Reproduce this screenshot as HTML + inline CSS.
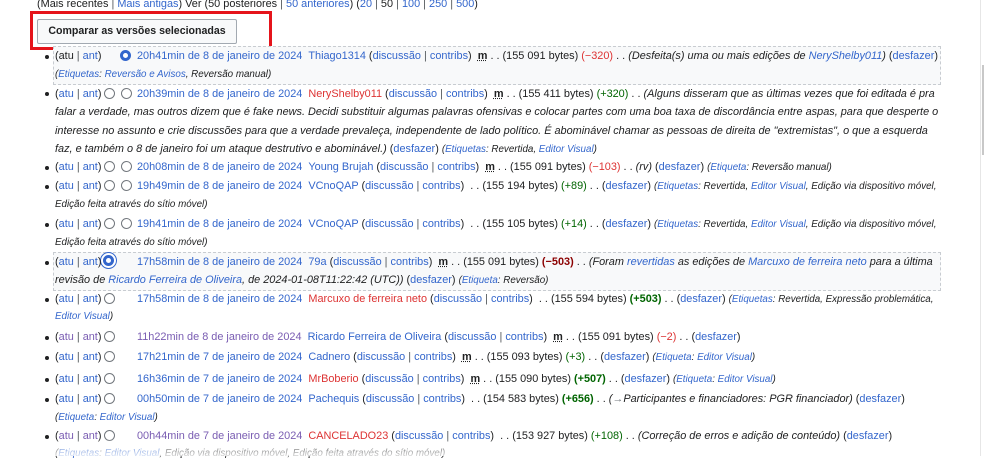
<!DOCTYPE html>
<html><head><meta charset="utf-8"><style>
body{margin:0;width:984px;height:456px;background:#fff;overflow:hidden;position:relative;font-family:"Liberation Sans",Arial,sans-serif;font-size:10.9px;color:#202122}
.l{position:absolute;white-space:nowrap;line-height:16px;height:16px}
a{color:#3366cc;text-decoration:none}
.v{color:#795cb2}
.r{color:#d33}
.i{font-style:italic}
.pos{color:#006400}
.neg{color:#8b0000}
b.neg,b.pos{font-weight:bold}
.m{font-weight:bold;text-decoration:underline dotted}
.s{color:#54595d}
.rad{position:absolute;width:9px;height:9px;border:1px solid #72777d;border-radius:50%;background:#fff}
.sel{border:3px solid #36c;width:5px;height:5px}
.dot{position:absolute;width:4px;height:4px;background:#202122;border-radius:50%}
.box{position:absolute;border:1px dashed #c8ccd1;background:#f8f9fa}
.sm{font-size:9.8px}
</style></head><body>
<div class="l" style="left:37px;top:-4px">(Mais recentes <span class="s">|</span> <a>Mais antigas</a>) Ver (50 posteriores <span class="s">|</span> <a>50 anteriores</a>) (<a>20</a> <span class="s">|</span> 50 <span class="s">|</span> <a>100</a> <span class="s">|</span> <a>250</a> <span class="s">|</span> <a>500</a>)</div>
<div style="position:absolute;left:30px;top:11px;width:236px;height:33px;border:3px solid #e5141b"></div>
<div style="position:absolute;left:37px;top:19px;width:198px;height:23px;border:1px solid #a2a9b1;border-radius:2px;background:#f8f9fa;font-weight:bold;font-size:10.6px;line-height:23px;text-align:center;color:#202122">Comparar as versões selecionadas</div>

<div class="box" style="left:53px;top:46px;width:886px;height:37px"></div>
<div class="box" style="left:53px;top:252px;width:886px;height:37px"></div>

<div class="dot" style="left:45px;top:55px"></div>
<div class="dot" style="left:45px;top:92px"></div>
<div class="dot" style="left:45px;top:166px"></div>
<div class="dot" style="left:45px;top:185px"></div>
<div class="dot" style="left:45px;top:223px"></div>
<div class="dot" style="left:45px;top:261px"></div>
<div class="dot" style="left:45px;top:298px"></div>
<div class="dot" style="left:45px;top:336px"></div>
<div class="dot" style="left:45px;top:356px"></div>
<div class="dot" style="left:45px;top:378px"></div>
<div class="dot" style="left:45px;top:398px"></div>
<div class="dot" style="left:45px;top:435px"></div>

<div class="rad sel" style="left:120px;top:50px"></div>
<div class="rad" style="left:104px;top:88px"></div><div class="rad" style="left:121px;top:88px"></div>
<div class="rad" style="left:104px;top:161px"></div><div class="rad" style="left:121px;top:161px"></div>
<div class="rad" style="left:104px;top:180px"></div><div class="rad" style="left:121px;top:180px"></div>
<div class="rad" style="left:104px;top:218px"></div><div class="rad" style="left:121px;top:218px"></div>
<div class="rad sel" style="left:103px;top:255px;box-shadow:0 0 0 2px #fff,0 0 0 3px #36c"></div>
<div class="rad" style="left:104px;top:293px"></div>
<div class="rad" style="left:104px;top:331px"></div>
<div class="rad" style="left:104px;top:351px"></div>
<div class="rad" style="left:104px;top:373px"></div>
<div class="rad" style="left:104px;top:393px"></div>
<div class="rad" style="left:104px;top:430px"></div>

<div class="l" style="left:55px;top:48px">(atu <span class="s">|</span> <a>ant</a>)</div>
<div class="l" style="left:137px;top:48px"><a>20h41min de 8 de janeiro de 2024</a> &nbsp;<a>Thiago1314</a> (<a>discussão</a> <span class="s">|</span> <a>contribs</a>) &nbsp;<span class="m">m</span> . . (155 091 bytes) <span class="r">(−320)</span> . . <span class="i">(Desfeita(s) uma ou mais edições de <a>NeryShelby011</a>)</span> (<a>desfazer</a>)</div>
<div class="l sm i" style="left:55px;top:67px">(<a>Etiquetas</a>: <a>Reversão e Avisos</a>, Reversão manual)</div>

<div class="l" style="left:55px;top:86px">(<a>atu</a> <span class="s">|</span> <a>ant</a>)</div>
<div class="l" style="left:137px;top:86px"><a>20h39min de 8 de janeiro de 2024</a> &nbsp;<a class="r">NeryShelby011</a> (<a>discussão</a> <span class="s">|</span> <a>contribs</a>) &nbsp;<span class="m">m</span> . . (155 411 bytes) <span class="pos">(+320)</span> . . <span class="i">(Alguns disseram que as últimas vezes que foi editada é pra</span></div>
<div class="l i" style="left:55px;top:104px">falar a verdade, mas outros dizem que é fake news. Decidi substituir algumas palavras ofensivas e colocar partes com uma boa taxa de discordância entre aspas, para que desperte o</div>
<div class="l i" style="left:55px;top:123px">interesse no assunto e crie discussões para que a verdade prevaleça, independente de lado político. É abominável chamar as pessoas de direita de "extremistas", o que a esquerda</div>
<div class="l" style="left:55px;top:141px"><span class="i">faz, e também o 8 de janeiro foi um ataque destrutivo e abominável.)</span> (<a>desfazer</a>) <span class="sm i">(<a>Etiquetas</a>: Revertida, <a>Editor Visual</a>)</span></div>

<div class="l" style="left:55px;top:159px">(<a>atu</a> <span class="s">|</span> <a>ant</a>)</div>
<div class="l" style="left:137px;top:159px"><a>20h08min de 8 de janeiro de 2024</a> &nbsp;<a>Young Brujah</a> (<a>discussão</a> <span class="s">|</span> <a>contribs</a>) &nbsp;<span class="m">m</span> . . (155 091 bytes) <span class="r">(−103)</span> . . <span class="i">(rv)</span> (<a>desfazer</a>) <span class="sm i">(<a>Etiqueta</a>: Reversão manual)</span></div>

<div class="l" style="left:55px;top:178px">(<a>atu</a> <span class="s">|</span> <a>ant</a>)</div>
<div class="l" style="left:137px;top:178px"><a>19h49min de 8 de janeiro de 2024</a> &nbsp;<a>VCnoQAP</a> (<a>discussão</a> <span class="s">|</span> <a>contribs</a>) &nbsp;. . (155 194 bytes) <span class="pos">(+89)</span> . . (<a>desfazer</a>) <span class="sm i">(<a>Etiquetas</a>: Revertida, <a>Editor Visual</a>, Edição via dispositivo móvel,</span></div>
<div class="l sm i" style="left:55px;top:197px">Edição feita através do sítio móvel)</div>

<div class="l" style="left:55px;top:216px">(<a>atu</a> <span class="s">|</span> <a>ant</a>)</div>
<div class="l" style="left:137px;top:216px"><a>19h41min de 8 de janeiro de 2024</a> &nbsp;<a>VCnoQAP</a> (<a>discussão</a> <span class="s">|</span> <a>contribs</a>) &nbsp;. . (155 105 bytes) <span class="pos">(+14)</span> . . (<a>desfazer</a>) <span class="sm i">(<a>Etiquetas</a>: Revertida, <a>Editor Visual</a>, Edição via dispositivo móvel,</span></div>
<div class="l sm i" style="left:55px;top:235px">Edição feita através do sítio móvel)</div>

<div class="l" style="left:55px;top:254px">(<a>atu</a> <span class="s">|</span> <a>ant</a>)</div>
<div class="l" style="left:137px;top:254px"><a>17h58min de 8 de janeiro de 2024</a> &nbsp;<a>79a</a> (<a>discussão</a> <span class="s">|</span> <a>contribs</a>) &nbsp;<span class="m">m</span> . . (155 091 bytes) <b class="neg">(−503)</b> . . <span class="i">(Foram <a>revertidas</a> as edições de <a>Marcuxo de ferreira neto</a> para a última</span></div>
<div class="l" style="left:55px;top:272px"><span class="i">revisão de <a>Ricardo Ferreira de Oliveira</a>, de 2024-01-08T11:22:42 (UTC))</span> (<a>desfazer</a>) <span class="sm i">(<a>Etiqueta</a>: Reversão)</span></div>

<div class="l" style="left:55px;top:291px">(<a>atu</a> <span class="s">|</span> <a>ant</a>)</div>
<div class="l" style="left:137px;top:291px"><a>17h58min de 8 de janeiro de 2024</a> &nbsp;<a class="r">Marcuxo de ferreira neto</a> (<a>discussão</a> <span class="s">|</span> <a>contribs</a>) &nbsp;. . (155 594 bytes) <b class="pos">(+503)</b> . . (<a>desfazer</a>) <span class="sm i">(<a>Etiquetas</a>: Revertida, Expressão problemática,</span></div>
<div class="l sm i" style="left:55px;top:309px"><a>Editor Visual</a>)</div>

<div class="l" style="left:55px;top:329px">(<a class="v">atu</a> <span class="s">|</span> <a class="v">ant</a>)</div>
<div class="l" style="left:137px;top:329px"><a class="v">11h22min de 8 de janeiro de 2024</a> &nbsp;<a>Ricardo Ferreira de Oliveira</a> (<a>discussão</a> <span class="s">|</span> <a>contribs</a>) &nbsp;<span class="m">m</span> . . (155 091 bytes) <span class="r">(−2)</span> . . (<a>desfazer</a>)</div>

<div class="l" style="left:55px;top:349px">(<a>atu</a> <span class="s">|</span> <a>ant</a>)</div>
<div class="l" style="left:137px;top:349px"><a>17h21min de 7 de janeiro de 2024</a> &nbsp;<a>Cadnero</a> (<a>discussão</a> <span class="s">|</span> <a>contribs</a>) &nbsp;<span class="m">m</span> . . (155 093 bytes) <span class="pos">(+3)</span> . . (<a>desfazer</a>) <span class="sm i">(<a>Etiqueta</a>: <a>Editor Visual</a>)</span></div>

<div class="l" style="left:55px;top:371px">(<a>atu</a> <span class="s">|</span> <a>ant</a>)</div>
<div class="l" style="left:137px;top:371px"><a>16h36min de 7 de janeiro de 2024</a> &nbsp;<a class="r">MrBoberio</a> (<a>discussão</a> <span class="s">|</span> <a>contribs</a>) &nbsp;<span class="m">m</span> . . (155 090 bytes) <b class="pos">(+507)</b> . . (<a>desfazer</a>) <span class="sm i">(<a>Etiqueta</a>: <a>Editor Visual</a>)</span></div>

<div class="l" style="left:55px;top:391px">(<a>atu</a> <span class="s">|</span> <a>ant</a>)</div>
<div class="l" style="left:137px;top:391px"><a>00h50min de 7 de janeiro de 2024</a> &nbsp;<a>Pachequis</a> (<a>discussão</a> <span class="s">|</span> <a>contribs</a>) &nbsp;. . (154 583 bytes) <b class="pos">(+656)</b> . . <span class="i">(<span style="color:#72777d">→</span>Participantes e financiadores: PGR financiador)</span> (<a>desfazer</a>)</div>
<div class="l sm i" style="left:55px;top:410px">(<a>Etiqueta</a>: <a>Editor Visual</a>)</div>

<div class="l" style="left:55px;top:428px">(<a class="v">atu</a> <span class="s">|</span> <a class="v">ant</a>)</div>
<div class="l" style="left:137px;top:428px"><a class="v">00h44min de 7 de janeiro de 2024</a> &nbsp;<a class="r">CANCELADO23</a> (<a>discussão</a> <span class="s">|</span> <a>contribs</a>) &nbsp;. . (153 927 bytes) <span class="pos">(+108)</span> . . <span class="i">(Correção de erros e adição de conteúdo)</span> (<a>desfazer</a>)</div>
<div class="l sm i" style="left:55px;top:446px">(<a>Etiquetas</a>: <a>Editor Visual</a>, Edição via dispositivo móvel, Edição feita através do sítio móvel)</div>

<div style="position:absolute;left:0;top:438px;width:984px;height:18px;background:linear-gradient(rgba(255,255,255,0),rgba(255,255,255,.8))"></div>
<div style="position:absolute;left:980px;top:0;width:1px;height:456px;background:#e6e6e6"></div>
<div style="position:absolute;left:982px;top:65px;width:2px;height:90px;background:#c8c8c8"></div>
</body></html>
